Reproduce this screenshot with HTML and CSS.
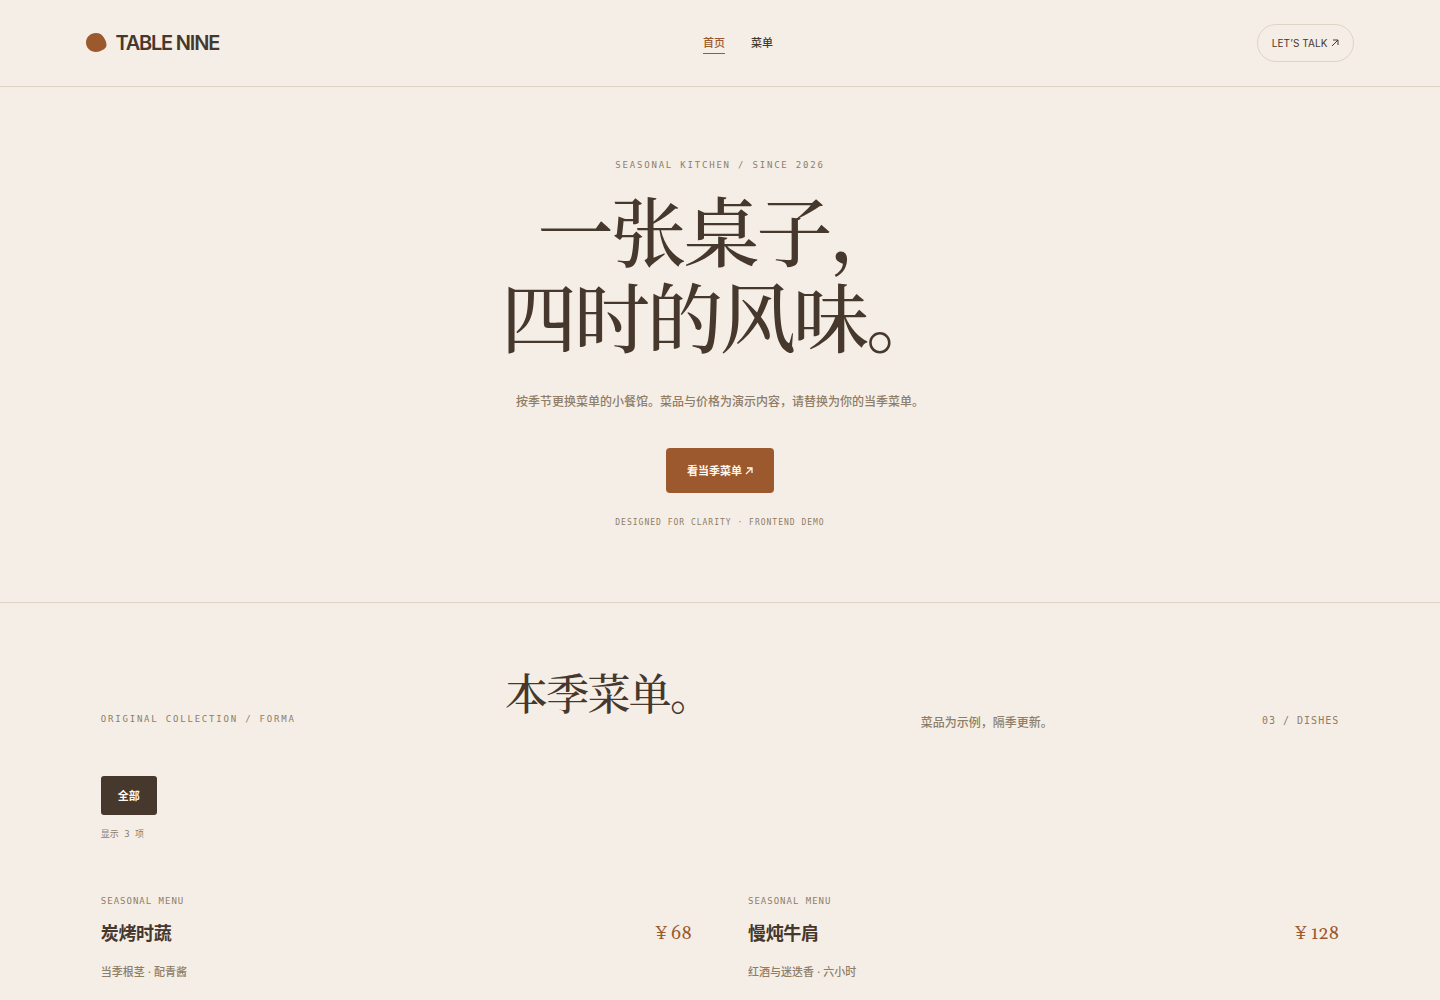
FILE: index.html
```html
<!DOCTYPE html>
<html lang="zh-CN">
<head>
<meta charset="utf-8">
<meta name="viewport" content="width=device-width, initial-scale=1">
<title>TABLE NINE</title>
<link rel="stylesheet" href="styles.css">
</head>
<body>
<header class="site-header">
  <a class="brand" href="#">
    <svg class="brand-mark" viewBox="0 0 21 22" aria-hidden="true"><path d="M10 1C13.500 1 15.800 2.300 17.500 5C19.200 7.600 20.500 10 20.500 13C20.500 15.500 18.500 17 16.500 18C14.300 19.200 12.500 20 10 20C4.500 20 0 16 0 10.500C0 5 4.500 1 10 1Z"/></svg>
    <span>TABLE NINE</span>
  </a>
  <nav class="nav">
    <a class="nav-link is-active" href="#">首页</a>
    <a class="nav-link" href="#menu">菜单</a>
  </nav>
  <a class="talk" href="#menu">LET’S TALK
    <svg class="arrow" viewBox="0 0 8 8" aria-hidden="true"><path d="M1 7L7 1M2 1H7V6"/></svg>
  </a>
</header>
<main>
  <section class="hero">
    <p class="eyebrow">SEASONAL KITCHEN / SINCE 2026</p>
    <h1 class="hero-title">一张桌子，<br>四时的风味。</h1>
    <p class="hero-text">按季节更换菜单的小餐馆。菜品与价格为演示内容，请替换为你的当季菜单。</p>
    <a class="cta" href="#menu">看当季菜单
      <svg class="arrow arrow-bold" viewBox="0 0 8 8" aria-hidden="true"><path d="M1 7L7 1M2 1H7V6"/></svg>
    </a>
    <p class="hero-note">DESIGNED FOR CLARITY · FRONTEND DEMO</p>
  </section>
  <section class="menu" id="menu">
    <div class="menu-head">
      <p class="eyebrow">ORIGINAL COLLECTION / FORMA</p>
      <h2 class="menu-title">本季菜单。</h2>
      <p class="menu-text">菜品为示例，隔季更新。</p>
      <p class="menu-count">03 / DISHES</p>
    </div>
    <button class="filter" type="button" aria-pressed="true">全部</button>
    <p class="result">显示 3 项</p>
    <div class="dishes">
      <article class="dish">
        <p class="dish-tag">SEASONAL MENU</p>
        <div class="dish-row"><h3 class="dish-name">炭烤时蔬</h3><span class="price">¥ 68</span></div>
        <p class="dish-text">当季根茎 · 配青酱</p>
      </article>
      <article class="dish">
        <p class="dish-tag">SEASONAL MENU</p>
        <div class="dish-row"><h3 class="dish-name">慢炖牛肩</h3><span class="price">¥ 128</span></div>
        <p class="dish-text">红酒与迷迭香 · 六小时</p>
      </article>
    </div>
  </section>
</main>
</body>
</html>
```
FILE: styles.css
```css
:root {
  --paper: #f5eee6;
  --ink: #46382d;
  --muted: #8e7d67;
  --accent: #9c592e;
  --line: #dfd3c5;
  --sans: Inter, "Noto Sans CJK SC", sans-serif;
  --serif: "Songti SC", "Noto Serif CJK SC", "Noto Serif SC", "Noto Sans CJK SC", serif;
  --numerals: Georgia, Gelasio, "Liberation Serif", serif;
  --mono: "DejaVu Sans Mono", "Noto Sans CJK SC", monospace;
}
* { box-sizing: border-box; }
body {
  margin: 0;
  background: var(--paper);
  color: var(--ink);
  font-family: var(--sans);
}
h1, h2, h3, p { margin: 0; }
a { color: inherit; text-decoration: none; }

.site-header {
  display: flex;
  align-items: center;
  justify-content: space-between;
  padding: 24px 6%;
  border-bottom: 1px solid var(--line);
}
.brand {
  display: flex;
  align-items: center;
  gap: 8px;
  font-size: 20px;
  font-weight: 600;
  line-height: 24px;
  letter-spacing: -0.06em;
}
.brand-mark { width: 21px; height: 22px; fill: var(--accent); }
.nav { display: flex; gap: 26px; }
.nav-link {
  padding: 1px 0;
  border-bottom: 1px solid transparent;
  font-size: 11px;
  font-weight: 500;
  line-height: 18px;
}
.nav-link.is-active { color: var(--accent); border-color: var(--accent); }
.talk {
  display: flex;
  align-items: center;
  gap: 3px;
  padding: 0 14px;
  border: 1px solid var(--line);
  border-radius: 19px;
  font-size: 10px;
  line-height: 36px;
  letter-spacing: 0.01em;
}
.arrow { width: 8px; height: 8px; fill: none; stroke: currentColor; stroke-width: 1; }
.arrow-bold { stroke-width: 1.3; }

.eyebrow {
  color: var(--muted);
  font-family: var(--mono);
  font-size: 9px;
  line-height: 30px;
  letter-spacing: 0.2em;
}
.hero {
  display: flex;
  flex-direction: column;
  align-items: center;
  padding: 63px 7% 70px;
  border-bottom: 1px solid var(--line);
  text-align: center;
}
.hero-title {
  margin-top: 6px;
  font-family: var(--serif);
  font-size: 76px;
  font-weight: 500;
  line-height: 86px;
  letter-spacing: -0.04em;
}
.hero-text {
  margin-top: 33px;
  color: var(--muted);
  font-size: 12px;
  font-weight: 500;
  line-height: 22px;
}
.cta {
  display: flex;
  align-items: center;
  gap: 3px;
  margin-top: 35px;
  padding: 1px 21px 0;
  border-radius: 4px;
  background: var(--accent);
  color: #fff7ee;
  font-size: 11px;
  font-weight: 700;
  line-height: 44px;
}
.hero-note {
  margin-top: 21px;
  color: var(--muted);
  font-family: var(--mono);
  font-size: 8px;
  line-height: 18px;
  letter-spacing: 1px;
}

.menu { padding: 65px 7% 16px; }
.menu-head {
  display: flex;
  flex-wrap: wrap;
  align-items: flex-end;
  justify-content: space-between;
}
.menu-title {
  margin-bottom: 18px;
  font-family: var(--serif);
  font-size: 43px;
  font-weight: 500;
  line-height: 48px;
  letter-spacing: -0.04em;
}
.menu-text { color: var(--muted); font-size: 12px; font-weight: 500; line-height: 22px; }
.menu-count {
  color: var(--muted);
  font-family: var(--mono);
  font-size: 10px;
  line-height: 26px;
  letter-spacing: 1px;
}
.filter {
  display: block;
  margin-top: 42px;
  padding: 1px 17px 0;
  border: 0;
  border-radius: 3px;
  background: var(--ink);
  color: #fff7ee;
  font-family: var(--sans);
  font-size: 11px;
  font-weight: 700;
  line-height: 38px;
}
.result {
  margin-top: 10px;
  color: var(--muted);
  font-family: var(--mono);
  font-size: 9px;
  line-height: 18px;
}
.dishes {
  display: grid;
  grid-template-columns: 1fr 1fr;
  gap: 56px;
  margin-top: 49px;
}
.dish-tag {
  color: var(--muted);
  font-family: var(--mono);
  font-size: 9px;
  line-height: 18px;
  letter-spacing: 1px;
}
.dish-row {
  display: flex;
  align-items: center;
  justify-content: space-between;
  margin-top: 10px;
}
.dish-name { font-size: 18px; font-weight: 700; line-height: 28px; letter-spacing: -0.02em; }
.price { color: var(--accent); font-family: var(--numerals); font-size: 18px; line-height: 28px; }
.dish-text {
  margin-top: 15px;
  color: var(--muted);
  font-size: 11px;
  font-weight: 500;
  line-height: 18px;
}
```
